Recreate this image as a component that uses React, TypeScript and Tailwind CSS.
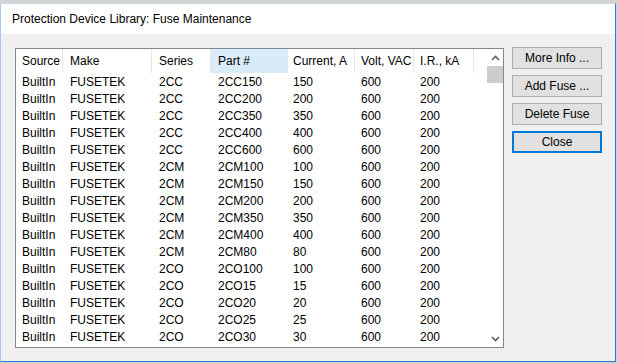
import React from "react";

const rows: [string, string, string][] = [
  ["2CC", "2CC150", "150"],
  ["2CC", "2CC200", "200"],
  ["2CC", "2CC350", "350"],
  ["2CC", "2CC400", "400"],
  ["2CC", "2CC600", "600"],
  ["2CM", "2CM100", "100"],
  ["2CM", "2CM150", "150"],
  ["2CM", "2CM200", "200"],
  ["2CM", "2CM350", "350"],
  ["2CM", "2CM400", "400"],
  ["2CM", "2CM80", "80"],
  ["2CO", "2CO100", "100"],
  ["2CO", "2CO15", "15"],
  ["2CO", "2CO20", "20"],
  ["2CO", "2CO25", "25"],
  ["2CO", "2CO30", "30"],
];

const cols = [
  { label: "Source", w: "w-[47px]", pl: "pl-[6px]" },
  { label: "Make", w: "w-[89px]", pl: "pl-[7px]" },
  { label: "Series", w: "w-[59px]", pl: "pl-[7px]" },
  { label: "Part #", w: "w-[77px]", pl: "pl-[7px]" },
  { label: "Current, A", w: "w-[67px]", pl: "pl-[5px]" },
  { label: "Volt, VAC", w: "w-[59px]", pl: "pl-[6px]" },
  { label: "I.R., kA", w: "w-[60px]", pl: "pl-[6px]" },
];

function Btn({ label, focused }: { label: string; focused?: boolean }) {
  return (
    <div
      className={
        "w-[90px] h-[22px] flex items-center justify-center bg-[#e1e1e1] text-[12px] text-black " +
        (focused ? "border-2 border-[#0078d7]" : "border border-[#adadad]")
      }
    >
      {label}
    </div>
  );
}

export default function App() {
  const font = { fontFamily: '"Segoe UI", "Liberation Sans", sans-serif' };
  return (
    <div className="w-[618px] h-[364px] bg-[#d4d4d4] pt-[3px] overflow-hidden" style={font}>
      <div className="w-[616px] h-[359px] border-l border-l-[#a8c8ee] border-t border-t-[#c8d8ea] border-r border-r-[#2b78d6] border-b border-b-[#2b78d6] bg-[#f0f0f0] flex flex-col">
        <div className="h-[30px] bg-white flex items-center pl-[11px] text-[12px] text-black">
          Protection Device Library: Fuse Maintenance
        </div>
        <div className="flex pt-[13px] pl-[14px]">
          <div className="w-[489px] h-[300px] border border-[#828790] bg-white flex mt-[1px]">
            <div className="flex flex-col w-[470px]">
              <div className="flex h-[24px] text-[12px] text-black">
                {cols.map((c, i) => (
                  <div
                    key={c.label}
                    className={
                      c.w +
                      " " +
                      c.pl +
                      " h-full flex items-center " +
                      (i === 3 ? "bg-[#d9ebf9]" : "border-r border-r-[#e5e5e5]")
                    }
                  >
                    {c.label}
                  </div>
                ))}
              </div>
              {rows.map((r) => (
                <div key={r[1]} className="flex h-[17px] items-center text-[12px] text-black">
                  <div className="w-[47px] pl-[6px]">BuiltIn</div>
                  <div className="w-[89px] pl-[7px]">FUSETEK</div>
                  <div className="w-[59px] pl-[7px]">{r[0]}</div>
                  <div className="w-[77px] pl-[7px]">{r[1]}</div>
                  <div className="w-[67px] pl-[5px]">{r[2]}</div>
                  <div className="w-[59px] pl-[6px]">600</div>
                  <div className="w-[60px] pl-[6px]">200</div>
                </div>
              ))}
            </div>
            <div className="ml-auto w-[16px] h-full flex flex-col items-center">
              <div className="h-[17px] w-full flex items-center justify-center">
                <svg width="9" height="6" viewBox="0 0 9 6">
                  <path d="M1 5 L4.5 1.5 L8 5" stroke="#606060" strokeWidth="1.6" fill="none" />
                </svg>
              </div>
              <div className="w-full h-[17px] bg-[#cdcdcd]" />
              <div className="flex-1" />
              <div className="h-[17px] w-full flex items-center justify-center">
                <svg width="9" height="6" viewBox="0 0 9 6">
                  <path d="M1 1 L4.5 4.5 L8 1" stroke="#606060" strokeWidth="1.6" fill="none" />
                </svg>
              </div>
            </div>
          </div>
          <div className="ml-[8px] flex flex-col gap-[6px]">
            <Btn label="More Info ..." />
            <Btn label="Add Fuse ..." />
            <Btn label="Delete Fuse" />
            <Btn label="Close" focused />
          </div>
        </div>
      </div>
    </div>
  );
}
